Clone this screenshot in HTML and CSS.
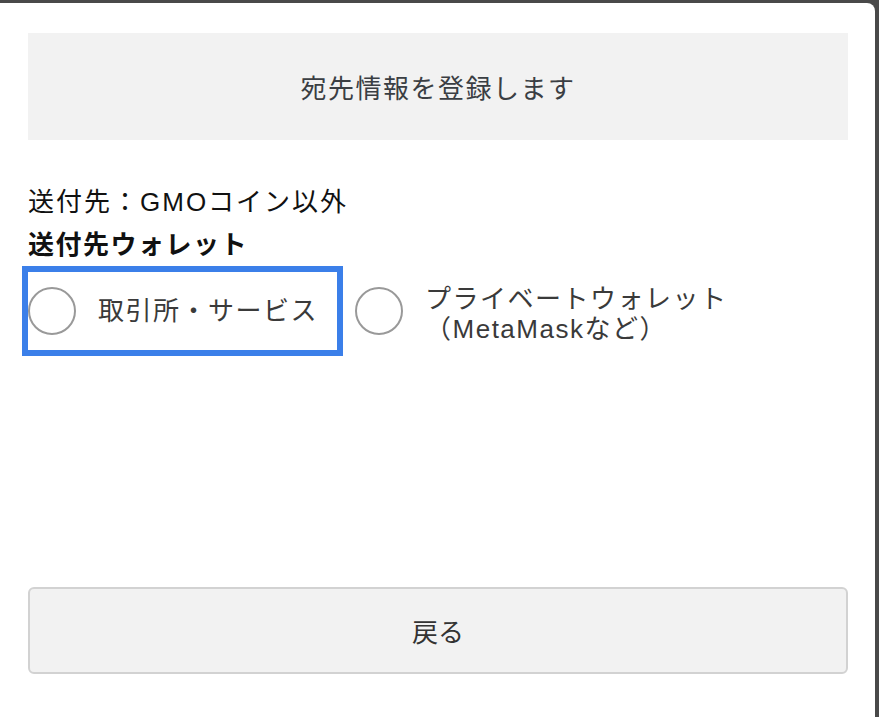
FILE: index.html
```html
<!DOCTYPE html>
<html lang="ja">
<head>
    <meta charset="UTF-8">
    <meta name="viewport" content="width=device-width, initial-scale=1.0">
    <title>宛先情報を登録します</title>
    <link rel="stylesheet" href="styles.css">
</head>
<body>
    <div class="modal">
        <div class="modal-title">宛先情報を登録します</div>

        <p class="dest">送付先：GMOコイン以外</p>
        <p class="label">送付先ウォレット</p>

        <div class="options">
            <label class="option focused">
                <input type="radio" name="wallet">
                <span class="radio"></span>
                <span class="option-text">取引所・サービス</span>
            </label>
            <label class="option">
                <input type="radio" name="wallet">
                <span class="radio"></span>
                <span class="option-text multi">プライベートウォレット<br>（MetaMaskなど）</span>
            </label>
        </div>

        <button class="back" type="button">戻る</button>
    </div>
</body>
</html>
```

FILE: styles.css
```css
* {
    margin: 0;
    padding: 0;
    box-sizing: border-box;
}
body {
    background-color: #494949;
    font-family: "Liberation Sans", "Noto Sans CJK JP", sans-serif;
    overflow: hidden;
    padding: 3px 4px 0 0;
}
.modal {
    background-color: #fff;
    border-top-right-radius: 8px;
    min-height: calc(100vh - 3px);
    padding: 30px 27px 43px 28px;
    display: flex;
    flex-direction: column;
}
.modal-title {
    background-color: #f2f2f2;
    height: 107px;
    display: flex;
    align-items: center;
    justify-content: center;
    font-size: 26px;
    letter-spacing: 1.5px;
    color: #3a3e43;
}
.dest {
    margin-top: 44px;
    font-size: 26px;
    line-height: 36px;
    letter-spacing: 2px;
    color: #111;
}
.label {
    margin-top: 7px;
    font-size: 26px;
    line-height: 36px;
    letter-spacing: 1.5px;
    font-weight: bold;
    color: #111;
}
.options {
    margin-top: 9px;
    display: flex;
    align-items: center;
    gap: 18px;
}
.option {
    display: flex;
    align-items: center;
    height: 78px;
    padding-right: 19px;
    cursor: pointer;
}
.option.focused {
    outline: 6px solid #3b7fe9;
}
.option input {
    display: none;
}
.radio {
    width: 48px;
    height: 48px;
    border: 2px solid #999;
    border-radius: 50%;
    flex-shrink: 0;
}
.option-text {
    margin-left: 22px;
    font-size: 26px;
    line-height: 30px;
    letter-spacing: 1.5px;
    color: #3a3a3a;
}
.option-text.multi {
    padding-top: 6px;
}
.back {
    margin-top: auto;
    height: 87px;
    background-color: #f2f2f2;
    border: 2px solid #d2d2d2;
    border-radius: 6px;
    font-family: inherit;
    font-size: 26px;
    color: #333;
}
```
